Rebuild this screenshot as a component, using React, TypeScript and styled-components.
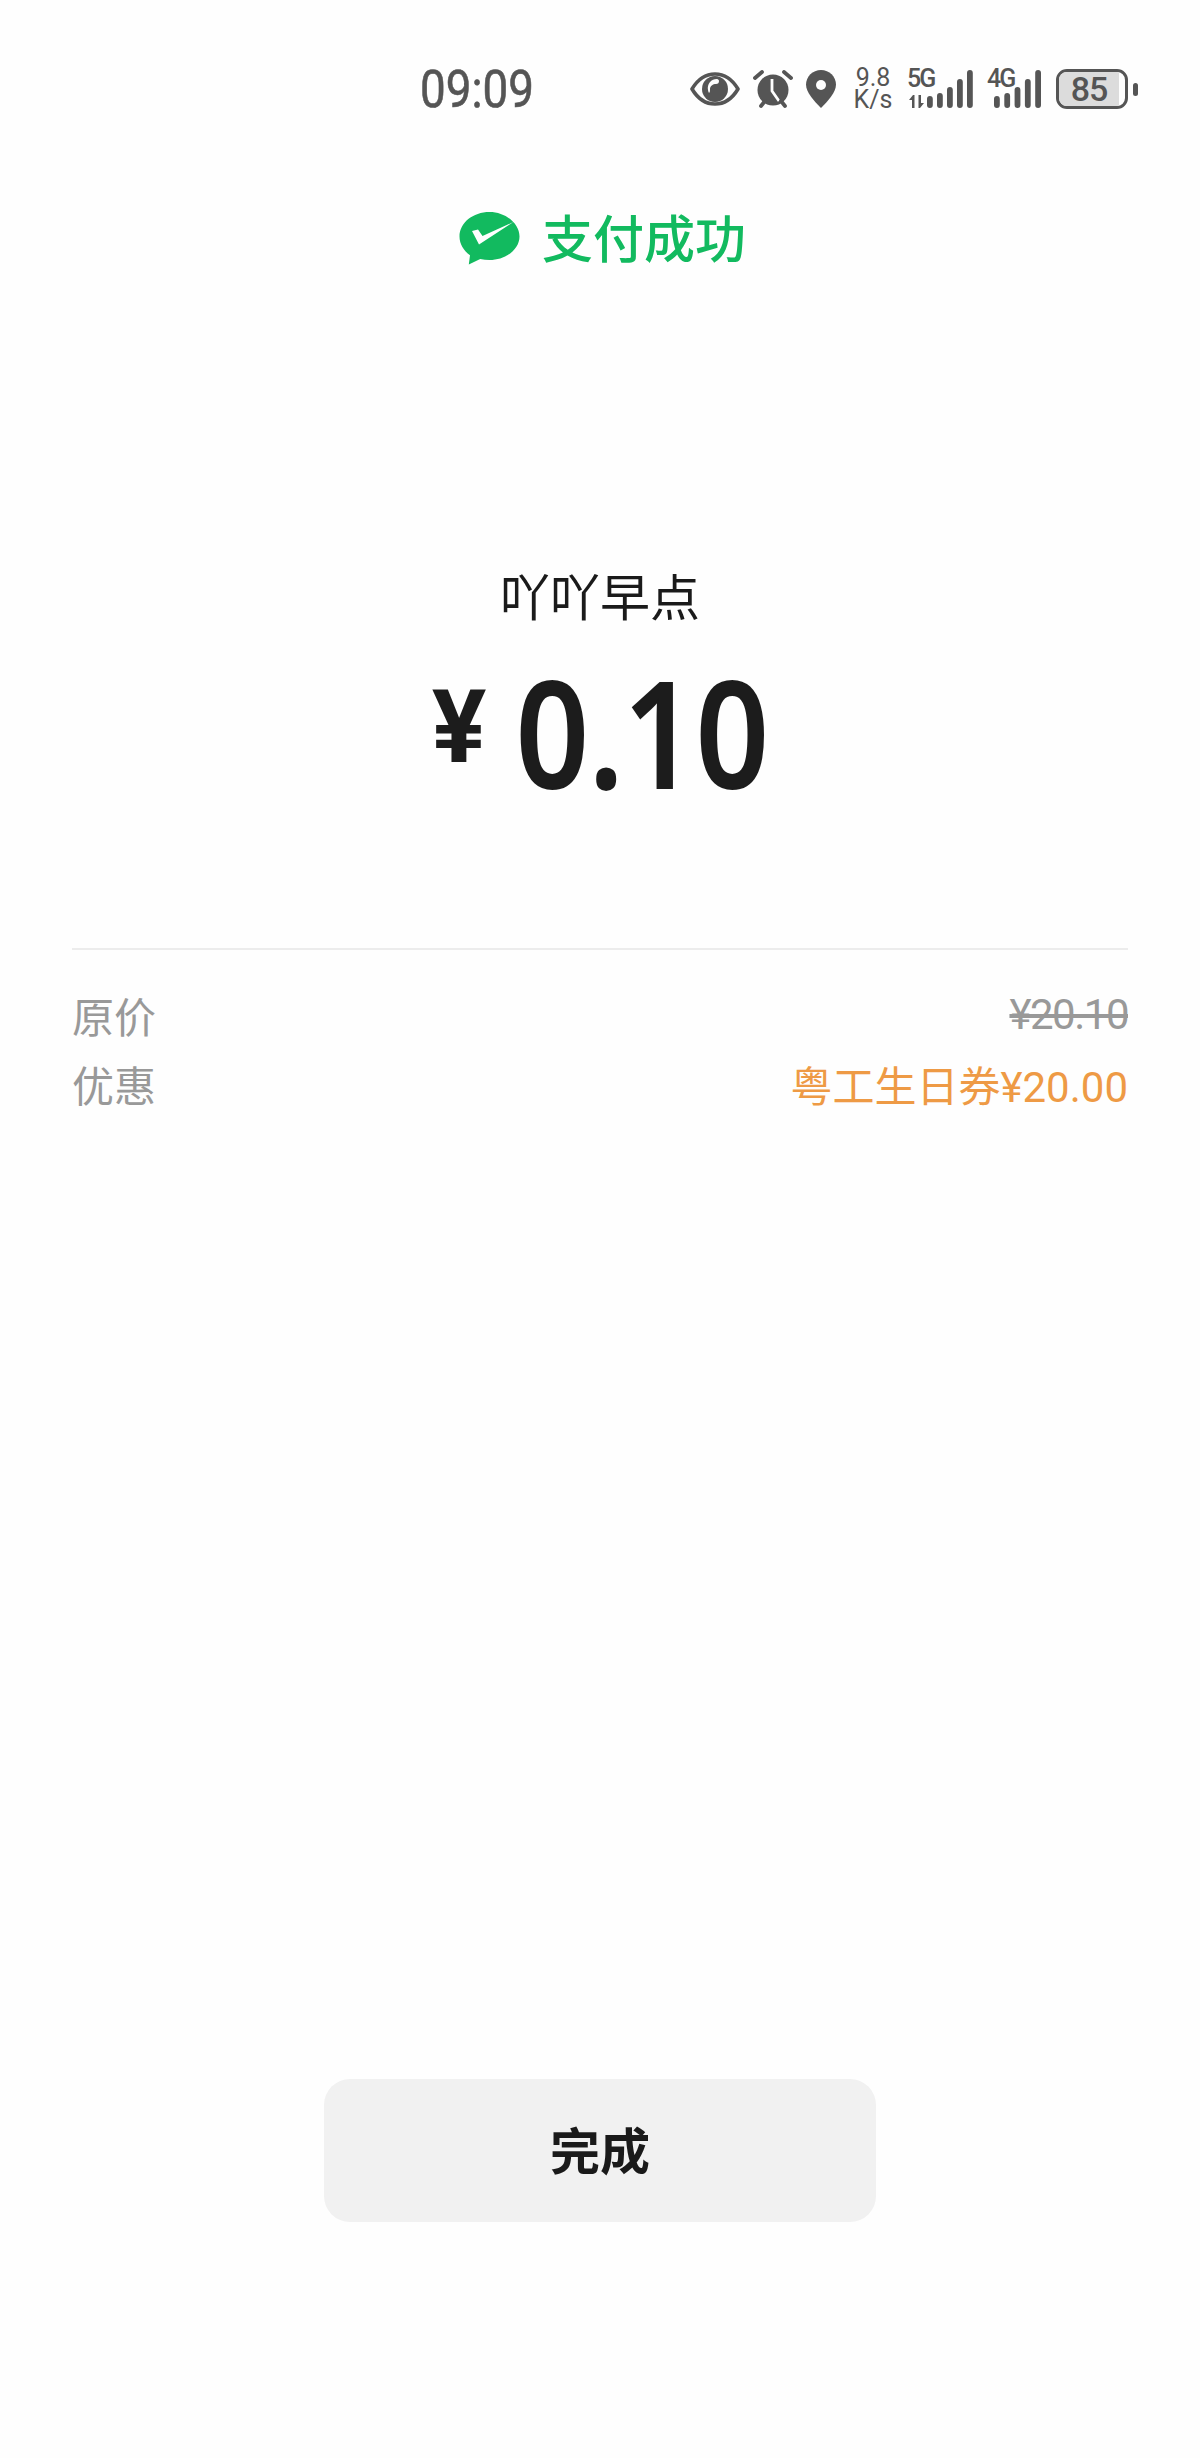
import React from "react";
import styled, { createGlobalStyle } from "styled-components";

const GlobalStyle = createGlobalStyle`
  html, body {
    margin: 0;
    padding: 0;
    background: #fefefe;
  }
  * {
    box-sizing: border-box;
  }
`;

const FONT = `Roboto, "Noto Sans CJK SC", sans-serif`;
const ICON = "#555555";

const EyeIcon = () => (
  <svg width="50" height="34" viewBox="0 0 50 34">
    <path
      d="M2 17C8 7 16 2 25 2s17 5 23 15c-6 10-14 15-23 15S8 27 2 17z"
      fill="none"
      stroke={ICON}
      strokeWidth="3.600"
      strokeLinejoin="round"
    />
    <circle cx="25" cy="17" r="13" fill={ICON} />
    <path d="M27 7a9 9 0 0 0-9 11c0 1 .5 2 1 3 1-1 1-2 1-4 0-3 3-5 6-5 2 0 3-1 3-3 0-1-1-2-2-2z" fill="#fefefe" />
  </svg>
);

const AlarmIcon = () => (
  <svg width="40" height="38" viewBox="0 0 40 38">
    <circle cx="20" cy="20" r="15.500" fill={ICON} />
    <path d="M19 9v12l7 10" fill="none" stroke="#fefefe" strokeWidth="2.800" strokeLinejoin="round" />
    <path
      d="M2 8l7-6M38 8l-7-6M8 36l4-5M32 36l-4-5"
      fill="none"
      stroke={ICON}
      strokeWidth="3.800"
      strokeLinecap="round"
    />
  </svg>
);

const PinIcon = () => (
  <svg width="30" height="38" viewBox="0 0 30 38">
    <path d="M15 0C6.700 0 0 6.500 0 14.600 0 22.500 8 31 15 38c7-7 15-15.500 15-23.400C30 6.500 23.300 0 15 0z" fill={ICON} />
    <circle cx="15" cy="15" r="5" fill="#fefefe" />
  </svg>
);

const SignalBars = ({ heights, pitch }: { heights: number[]; pitch: number }) => {
  const width = (heights.length - 1) * pitch + 5.8;
  return (
    <svg width={width} height="38" viewBox={`0 0 ${width} 38`}>
      {heights.map((h, i) => (
        <rect key={i} x={i * pitch} y={38 - h} width="5.800" height={h} rx="2.900" fill={ICON} />
      ))}
    </svg>
  );
};

const WeChatLogo = () => (
  <LogoMark width="61" height="54" viewBox="0 0 61 54">
    <path
      d="M30.500 1C14 1 .5 11.800.5 25.500c0 7.600 4.200 14.200 10.500 18.700L9.800 53.500l11.400-5.500c3 .7 6.100 1 9.300 1C47 49 60.500 38.200 60.500 25.500S47 1 30.500 1z"
      fill="#12ba5f"
    />
    <path d="M13 20l6-1.500 4.500 6.500L54.500 11 20 33.500z" fill="#fefefe" />
  </LogoMark>
);

export default function App() {
  return (
    <Page>
      <GlobalStyle />
      <StatusBar>
        <Clock>
          <ClockDigits>09:09</ClockDigits>
        </Clock>
        <StatusIcons>
          <EyeIcon />
          <AlarmIcon />
          <PinIcon />
          <Speed>
            <span>9.8</span>
            <span>K/s</span>
          </Speed>
          <Network $width={67}>
            <NetLabel>5G</NetLabel>
            <TrafficArrows>
              <svg width="18" height="13" viewBox="0 0 18 13">
                <path d="M5 0L1 5h3v8h2.500V0zM12 13l4-5h-3V0h-2.500v13z" fill={ICON} />
              </svg>
            </TrafficArrows>
            <BarsSlot>
              <SignalBars heights={[12, 15, 21, 29, 38]} pitch={10} />
            </BarsSlot>
          </Network>
          <Network $width={55}>
            <NetLabel>4G</NetLabel>
            <BarsSlot>
              <SignalBars heights={[12, 15, 21, 29, 38]} pitch={10.3} />
            </BarsSlot>
          </Network>
          <Battery>
            <BatteryBody>
              <BatteryLevel>85</BatteryLevel>
            </BatteryBody>
            <BatteryNub />
          </Battery>
        </StatusIcons>
      </StatusBar>

      <ResultTitle>
        <WeChatLogo />
        <ResultText>支付成功</ResultText>
      </ResultTitle>

      <Merchant>吖吖早点</Merchant>
      <Amount>
        <Currency>¥</Currency>
        <Value>
          <ValueDigits>0.10</ValueDigits>
        </Value>
      </Amount>

      <Details>
        <DetailRow>
          <DetailLabel>原价</DetailLabel>
          <OldPrice>¥20.10</OldPrice>
        </DetailRow>
        <DetailRow>
          <DetailLabel>优惠</DetailLabel>
          <Discount>粤工生日券¥20.00</Discount>
        </DetailRow>
      </Details>

      <DoneButton>完成</DoneButton>
    </Page>
  );
}

const Page = styled.div`
  width: 1200px;
  height: 2458px;
  display: flex;
  flex-direction: column;
  align-items: center;
  padding-top: 68px;
  background: #fefefe;
  font-family: ${FONT};
  overflow: hidden;
`;

const StatusBar = styled.div`
  width: 100%;
  height: 42px;
  display: flex;
  align-items: center;
  justify-content: space-between;
  padding: 0 62px 0 420px;
`;

const Clock = styled.div`
  width: 114px;
  height: 42px;
`;

const ClockDigits = styled.div`
  font-size: 52px;
  line-height: 44px;
  color: ${ICON};
  -webkit-text-stroke: 0.6px ${ICON};
  white-space: nowrap;
  transform: scaleX(0.88);
  transform-origin: left center;
`;

const StatusIcons = styled.div`
  display: flex;
  align-items: center;
  gap: 13px;
`;

const Speed = styled.div`
  width: 40px;
  margin-left: 4px;
  display: flex;
  flex-direction: column;
  align-items: center;
  font-size: 25px;
  line-height: 22px;
  color: ${ICON};
`;

const Network = styled.div<{ $width: number }>`
  position: relative;
  width: ${(props) => props.$width}px;
  height: 38px;
`;

const NetLabel = styled.span`
  position: absolute;
  left: 1px;
  top: -3px;
  font-size: 25px;
  line-height: 24px;
  font-weight: 500;
  letter-spacing: -2px;
  color: ${ICON};
`;

const TrafficArrows = styled.div`
  position: absolute;
  left: 2px;
  bottom: 0;
  display: flex;
`;

const BarsSlot = styled.div`
  position: absolute;
  right: 0;
  bottom: 0;
  display: flex;
`;

const Battery = styled.div`
  margin-left: 2px;
  display: flex;
  align-items: center;
  gap: 5px;
`;

const BatteryBody = styled.div`
  width: 72px;
  height: 40px;
  border: 3px solid ${ICON};
  border-radius: 11px;
  padding-right: 6px;
  display: flex;
  overflow: hidden;
`;

const BatteryLevel = styled.div`
  flex: 1;
  background: #dcdcdc;
  text-align: center;
  font-size: 34px;
  line-height: 34px;
  font-weight: 500;
  letter-spacing: -1px;
  color: ${ICON};
`;

const BatteryNub = styled.div`
  width: 5px;
  height: 13px;
  border-radius: 3px;
  background: ${ICON};
`;

const ResultTitle = styled.div`
  margin-top: 99px;
  padding-left: 5px;
  display: flex;
  align-items: center;
  gap: 22px;
`;

const LogoMark = styled.svg`
  margin-bottom: 6px;
`;

const ResultText = styled.div`
  font-size: 51px;
  line-height: 64px;
  font-weight: 500;
  color: #12ba5f;
`;

const Merchant = styled.div`
  margin-top: 296px;
  font-size: 50px;
  line-height: 60px;
  font-weight: 400;
  color: #1a1a1a;
`;

const Amount = styled.div`
  margin-top: 30px;
  display: flex;
  align-items: flex-start;
  gap: 30px;
  color: #1c1c1c;
`;

const Currency = styled.div`
  font-size: 102px;
  line-height: 136px;
  font-weight: 700;
`;

const Value = styled.div`
  width: 252px;
  height: 150px;
`;

const ValueDigits = styled.div`
  font-family: "Open Sans", sans-serif;
  font-size: 146px;
  line-height: 146px;
  font-weight: 600;
  -webkit-text-stroke: 2px #1c1c1c;
  white-space: nowrap;
  transform: scaleX(0.87);
  transform-origin: left center;
`;

const Details = styled.div`
  width: 1056px;
  margin-top: 139px;
  padding-top: 34px;
  border-top: 2px solid #ececec;
  display: flex;
  flex-direction: column;
  gap: 9px;
`;

const DetailRow = styled.div`
  display: flex;
  justify-content: space-between;
  align-items: center;
  height: 60px;
  font-size: 42px;
`;

const DetailLabel = styled.span`
  color: #999999;
`;

const OldPrice = styled.span`
  color: #999999;
  text-decoration: line-through;
  letter-spacing: -1.500px;
`;

const Discount = styled.span`
  color: #ee9a45;
`;

const DoneButton = styled.div`
  margin-top: 966px;
  width: 552px;
  height: 143px;
  padding-bottom: 5px;
  border-radius: 26px;
  background: #f1f1f1;
  display: flex;
  align-items: center;
  justify-content: center;
  font-size: 50px;
  font-weight: 700;
  color: #1a1a1a;
`;
